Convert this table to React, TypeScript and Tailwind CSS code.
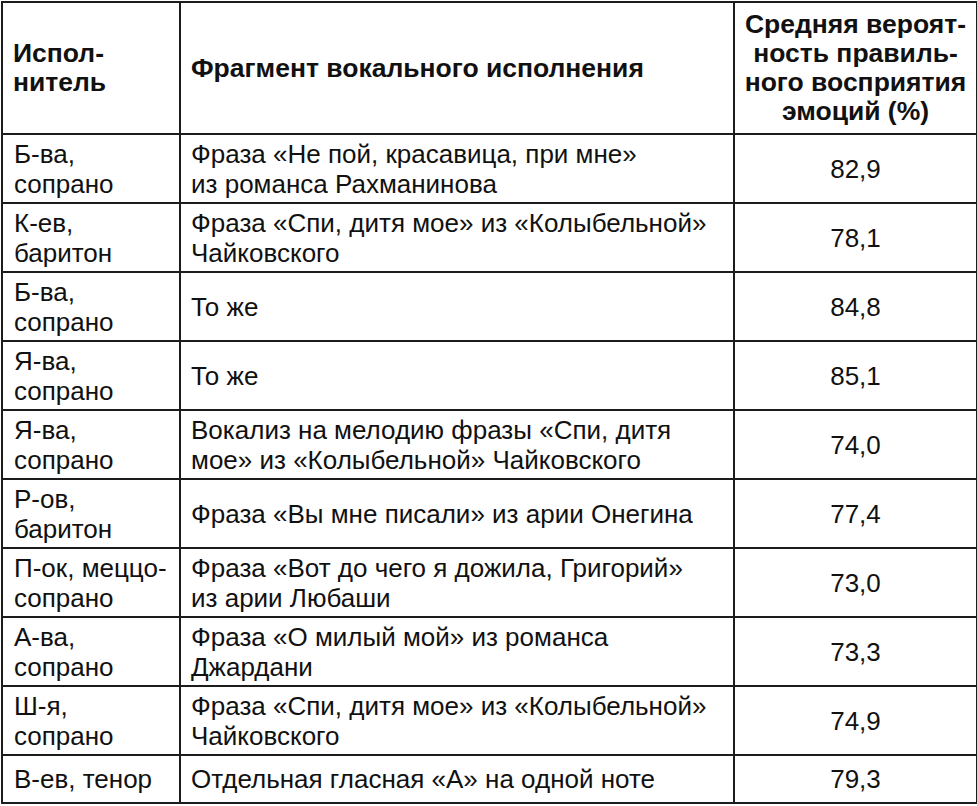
const rows: { who: string[]; frag: string[]; val: string }[] = [
  { who: ["Б-ва,", "сопрано"], frag: ["Фраза «Не пой, красавица, при мне»", "из романса Рахманинова"], val: "82,9" },
  { who: ["К-ев,", "баритон"], frag: ["Фраза «Спи, дитя мое» из «Колыбельной»", "Чайковского"], val: "78,1" },
  { who: ["Б-ва,", "сопрано"], frag: ["То же"], val: "84,8" },
  { who: ["Я-ва,", "сопрано"], frag: ["То же"], val: "85,1" },
  { who: ["Я-ва,", "сопрано"], frag: ["Вокализ на мелодию фразы «Спи, дитя", "мое» из «Колыбельной» Чайковского"], val: "74,0" },
  { who: ["Р-ов,", "баритон"], frag: ["Фраза «Вы мне писали» из арии Онегина"], val: "77,4" },
  { who: ["П-ок, меццо-", "сопрано"], frag: ["Фраза «Вот до чего я дожила, Григорий»", "из арии Любаши"], val: "73,0" },
  { who: ["А-ва,", "сопрано"], frag: ["Фраза «О милый мой» из романса", "Джардани"], val: "73,3" },
  { who: ["Ш-я,", "сопрано"], frag: ["Фраза «Спи, дитя мое» из «Колыбельной»", "Чайковского"], val: "74,9" },
  { who: ["В-ев, тенор"], frag: ["Отдельная гласная «А» на одной ноте"], val: "79,3" },
];

function Lines({ lines }: { lines: string[] }) {
  return (
    <>
      {lines.map((l, i) => (
        <div key={i} className="whitespace-nowrap">{l}</div>
      ))}
    </>
  );
}

export default function App() {
  return (
    <div className="w-[977px] h-[806px] bg-white pl-[1px] pt-[1px] font-['Liberation_Sans',Arial,sans-serif] text-[#111]">
      <table className="border-collapse table-fixed w-[975px]">
        <colgroup>
          <col className="w-[178px]" />
          <col className="w-[554px]" />
          <col className="w-[243px]" />
        </colgroup>
        <thead>
          <tr className="h-[132px] font-bold text-[26.5px] leading-[29px]">
            <th className="border-2 border-[#1c1c1c] px-[10px] text-left align-middle font-bold">
              <div>Испол-</div>
              <div>нитель</div>
            </th>
            <th className="border-2 border-[#1c1c1c] px-[10px] text-left align-middle font-bold whitespace-nowrap">
              Фрагмент вокального исполнения
            </th>
            <th className="border-2 border-[#1c1c1c] px-0 text-center align-middle font-bold whitespace-nowrap">
              <div>Средняя вероят-</div>
              <div>ность правиль-</div>
              <div>ного восприятия</div>
              <div>эмоций (%)</div>
            </th>
          </tr>
        </thead>
        <tbody className="text-[26px] leading-[30px]">
          {rows.map((r, i) => (
            <tr key={i} className={i === rows.length - 1 ? "h-[48px]" : "h-[69px]"}>
              <td className="border-2 border-[#1c1c1c] px-[11px] align-middle">
                <Lines lines={r.who} />
              </td>
              <td className="border-2 border-[#1c1c1c] px-[10px] align-middle">
                <Lines lines={r.frag} />
              </td>
              <td className="border-2 border-[#1c1c1c] text-center align-middle">{r.val}</td>
            </tr>
          ))}
        </tbody>
      </table>
    </div>
  );
}
